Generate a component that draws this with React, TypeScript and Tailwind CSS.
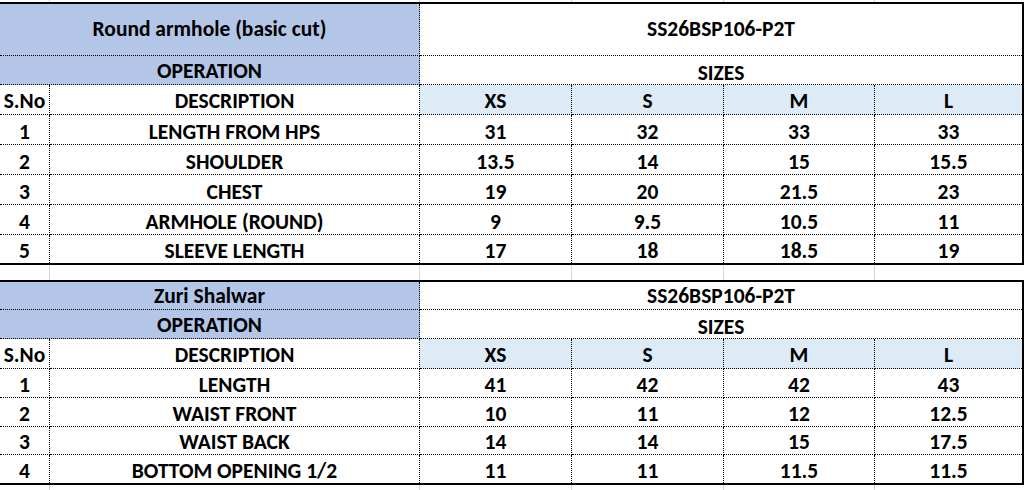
import React from "react";

type Row = { no: string; desc: string; vals: string[] };

const table1: Row[] = [
  { no: "1", desc: "LENGTH FROM HPS", vals: ["31", "32", "33", "33"] },
  { no: "2", desc: "SHOULDER", vals: ["13.5", "14", "15", "15.5"] },
  { no: "3", desc: "CHEST", vals: ["19", "20", "21.5", "23"] },
  { no: "4", desc: "ARMHOLE (ROUND)", vals: ["9", "9.5", "10.5", "11"] },
  { no: "5", desc: "SLEEVE LENGTH", vals: ["17", "18", "18.5", "19"] },
];

const table2: Row[] = [
  { no: "1", desc: "LENGTH", vals: ["41", "42", "42", "43"] },
  { no: "2", desc: "WAIST FRONT", vals: ["10", "11", "12", "12.5"] },
  { no: "3", desc: "WAIST BACK", vals: ["14", "14", "15", "17.5"] },
  { no: "4", desc: "BOTTOM OPENING 1/2", vals: ["11", "11", "11.5", "11.5"] },
];

const sizes = ["XS", "S", "M", "L"];

function Cell({
  children,
  className = "",
  last = false,
  bottom = true,
  pad = "pb-0",
}: {
  children?: React.ReactNode;
  className?: string;
  last?: boolean;
  bottom?: boolean;
  pad?: string;
}) {
  return (
    <div
      className={
        "flex items-end justify-center leading-[23px] whitespace-nowrap border-black border-dotted " +
        pad +
        " " +
        (last ? "" : "border-r ") +
        (bottom ? "border-b " : "") +
        className
      }
    >
      {children}
    </div>
  );
}

function SpecTable({
  title,
  rows,
  rowsClass,
  centerTitle,
}: {
  title: string;
  rows: Row[];
  rowsClass: string;
  centerTitle: boolean;
}) {
  const titleAlign = centerTitle
    ? " items-center leading-[23px]"
    : " items-end pb-[1px] leading-[23px]";
  return (
    <div
      className={
        "grid grid-cols-[50px_370px_152px_152px_151px_147px] w-[1024px] border-t-2 border-b-2 border-r-2 border-black " +
        rowsClass
      }
    >
      <div
        className={
          "col-span-2 flex justify-center whitespace-nowrap bg-[#b4c6e7] border-r border-b border-dotted border-black" +
          titleAlign
        }
      >
        {title}
      </div>
      <div
        className={
          "col-span-4 flex justify-center whitespace-nowrap border-b border-dotted border-black" + titleAlign
        }
      >
        SS26BSP106-P2T
      </div>
      <Cell className="col-span-2 bg-[#b4c6e7]" pad="pb-[1px]">
        OPERATION
      </Cell>
      <Cell className="col-span-4" pad="pb-0" last>
        <span className="translate-y-[1px]">SIZES</span>
      </Cell>
      <Cell pad="pb-[1px]">S.No</Cell>
      <Cell pad="pb-[1px]">DESCRIPTION</Cell>
      {sizes.map((s, i) => (
        <Cell key={s} className="bg-[#ddebf7]" pad="pb-[1px]" last={i === 3}>
          {s}
        </Cell>
      ))}
      {rows.map((r, ri) => {
        const isLast = ri === rows.length - 1;
        return (
          <React.Fragment key={r.no}>
            <Cell bottom={!isLast}>{r.no}</Cell>
            <Cell bottom={!isLast}>{r.desc}</Cell>
            {r.vals.map((v, i) => (
              <Cell key={i} bottom={!isLast} last={i === 3}>
                {v}
              </Cell>
            ))}
          </React.Fragment>
        );
      })}
    </div>
  );
}

function GapRow({ h }: { h: string }) {
  return (
    <div className={"grid grid-cols-[50px_370px_152px_152px_151px_147px] w-[1024px] " + h}>
      <div className="border-r border-[#d4d4d4]" />
      <div className="border-r border-[#d4d4d4]" />
      <div className="border-r border-[#d4d4d4]" />
      <div className="border-r border-[#d4d4d4]" />
      <div className="border-r border-[#d4d4d4]" />
      <div />
    </div>
  );
}

export default function App() {
  return (
    <div
      className="w-[1025px] h-[490px] bg-white text-black font-bold text-[21.5px] overflow-hidden"
      style={{ fontFamily: "Carlito, Calibri, Lato, 'Liberation Sans', sans-serif" }}
    >
      <GapRow h="h-[2px]" />
      <SpecTable
        title="Round armhole (basic cut)"
        rows={table1}
        rowsClass="grid-rows-[52px_29px_30px_30px_30px_30px_30px_28px]"
        centerTitle
      />
      <GapRow h="h-[15px]" />
      <SpecTable
        title="Zuri Shalwar"
        rows={table2}
        rowsClass="grid-rows-[28px_29px_30px_29px_29px_28px_28px]"
        centerTitle={false}
      />
      <GapRow h="h-[10px]" />
    </div>
  );
}
